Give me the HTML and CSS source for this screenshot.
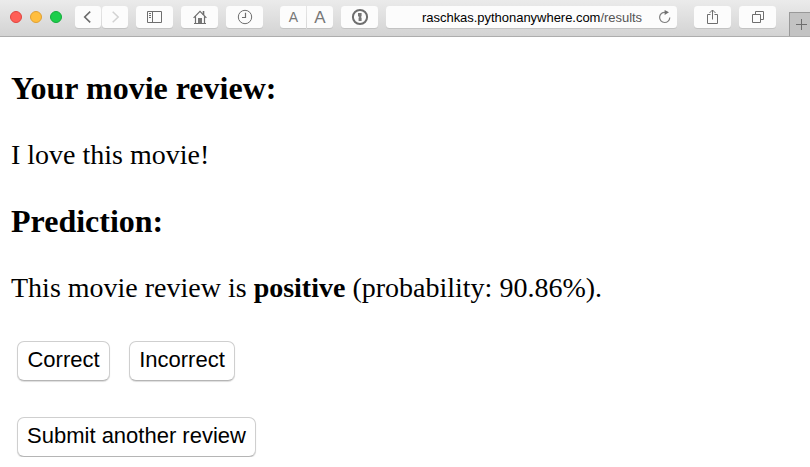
FILE: index.html
```html
<!DOCTYPE html>
<html lang="en">
<head>
<meta charset="utf-8">
<title>Movie review</title>
<link rel="stylesheet" href="styles.css">
</head>
<body>
<header class="toolbar">
  <div class="lights"><i class="light red"></i><i class="light yellow"></i><i class="light green"></i></div>
  <div class="pair nav">
    <span class="tool"><svg width="26" height="22" viewBox="0 0 26 22"><path d="M15.2 5.7 9.7 11l5.5 5.3" stroke="#6b6b6b" stroke-width="1.6"/></svg></span>
    <span class="tool"><svg width="26" height="22" viewBox="0 0 26 22"><path d="M10.7 5.7 16.2 11l-5.5 5.3" stroke="#d2d2d2" stroke-width="1.5"/></svg></span>
  </div>
  <span class="tool sidebar"><svg width="37" height="22" viewBox="0 0 37 22"><path d="M11.5 5.5h14v11h-14zM16.5 5.5v11M13 7.5h2M13 9.5h2M13 11.5h2"/></svg></span>
  <span class="tool home"><svg width="37" height="22" viewBox="0 0 37 22"><path d="M12.6 11.8 19 5.4l6.4 6.4M14.5 10.5v7M23.5 10.5v7M13 17.5h12" stroke-width="1.2"/><path d="M22.5 9V5" stroke-width="1.6"/><path class="solid" d="M17 12h4v5h-4z"/></svg></span>
  <span class="tool history"><svg width="37" height="22" viewBox="0 0 37 22"><circle cx="19" cy="11" r="6.7"/><path d="M19.5 6.8v4.7H16" stroke-width="1.2"/></svg></span>
  <div class="pair text-size">
    <span class="tool small-a">A</span><span class="tool large-a">A</span>
  </div>
  <span class="tool password"><svg width="37" height="22" viewBox="0 0 37 22"><circle cx="19" cy="11" r="7.1" stroke-width="2"/><path class="solid" d="M17 7h3.6v3.2l-.8.8.8.8V15H17.6v-3.2l.8-.8-1.4-.8z"/></svg></span>
  <div class="address"><span class="url">raschkas.pythonanywhere.com<span class="path">/results</span></span><svg class="reload" width="16" height="22" viewBox="0 0 16 22"><path d="M8.1 6.3a5.1 5.1 0 1 0 4.7 5.2" stroke="#808080" stroke-width="1.2"/><path d="M7.6 3.9v5l4.4-2.6z" fill="#707070" stroke="none"/></svg></div>
  <span class="tool share"><svg width="37" height="22" viewBox="0 0 37 22"><path d="M16.5 8.5h-3v9h10v-9h-3M18.5 13.5V4M15.5 7l3-3 3 3"/></svg></span>
  <span class="tool tabs"><svg width="37" height="22" viewBox="0 0 37 22"><path d="M13.5 8.5h8v8h-8zM16.5 8.5v-3h8v8h-3"/></svg></span>
  <span class="new-tab"><svg width="21" height="24" viewBox="0 0 21 24"><path d="M6 11.5h11M11.5 6v11"/></svg></span>
</header>
<main class="page">
  <h3>Your movie review:</h3>
  <p class="quote">I love this movie!</p>
  <h3>Prediction:</h3>
  <p class="result">This movie review is <strong>positive</strong> (probability: 90.86%).</p>
  <div class="actions">
    <button class="correct">Correct</button>
    <button class="incorrect">Incorrect</button>
  </div>
  <div class="actions again"><button class="submit">Submit another review</button></div>
</main>
</body>
</html>
```

FILE: styles.css
```css
* { box-sizing: border-box; }
body { margin: 0; background: #fff; color: #000; overflow: hidden; }
.toolbar {
  display: flex;
  align-items: flex-start;
  height: 37px;
  padding-top: 6px;
  border-bottom: 1px solid #adadad;
  background: linear-gradient(#ebebeb, #d3d3d3);
  font-family: "Liberation Sans", Arial, sans-serif;
}
.toolbar > * { flex: none; }
svg { display: block; fill: none; stroke: #6e6e6e; stroke-width: 1; }
.solid { fill: #777; stroke: none; }
.lights { display: flex; gap: 8px; margin: 5px 0 0 10px; }
.light { width: 12px; height: 12px; border-radius: 50%; border: 1px solid; }
.red { background: #ff5f57; border-color: #e0443e; }
.yellow { background: #ffbe3e; border-color: #dfa034; }
.green { background: #1cce4b; border-color: #14ab3b; }
.pair { display: flex; gap: 1px; }
.tool {
  display: block;
  height: 22px;
  border-radius: 3.5px;
  background: #fcfcfc;
  box-shadow: 0 1px 0 #c3c3c3;
}
.nav { margin-left: 13px; }
.sidebar, .home, .history, .password, .tabs { margin-left: 8px; }
.text-size { margin-left: 17px; }
.text-size .tool { width: 26px; text-align: center; color: #777; line-height: 23px; }
.text-size .small-a { font-size: 14px; border-radius: 3.5px 0 0 3.5px; padding-left: 1px; }
.text-size .large-a { font-size: 17px; border-radius: 0 3.5px 3.5px 0; }
.address {
  display: flex;
  width: 291px;
  height: 22px;
  margin-left: 8px;
  padding-left: 36px;
  border-radius: 3.5px;
  background: #fcfcfc;
  box-shadow: 0 1px 0 #c3c3c3;
  font-size: 13px;
  line-height: 23px;
  letter-spacing: -0.03px;
}
.url { width: 235px; white-space: nowrap; }
.path { color: #555; }
.share { margin-left: 17px; }
.new-tab {
  width: 21px;
  height: 24px;
  margin: 6px 0 0 13px;
  border: 1px solid #999;
  border-width: 1px 0 0 1px;
  background: #c3c3c3;
}
.page {
  padding: 32px 11px 0;
  font: 28px/32px "Liberation Serif", "Times New Roman", serif;
}
h3, p { margin: 0; white-space: nowrap; }
h3 { font-size: 32px; line-height: 38px; }
.quote { margin: 32px 0 31px; }
.result { margin: 32px 0 0; }
.actions { display: flex; gap: 19px; margin: 37px 0 0 6px; }
.again { margin-top: 36px; }
button {
  height: 40px;
  padding: 0 0 3px;
  border: 1px solid #cfcfcf;
  border-bottom-color: #b5b5b5;
  border-radius: 7px;
  background: #fff;
  box-shadow: 0 1px 1px #ddd;
  color: #000;
  font: 22px "Liberation Sans", Arial, sans-serif;
  white-space: nowrap;
}
.correct { width: 93px; }
.incorrect { width: 106px; }
.submit { width: 239px; }
```
